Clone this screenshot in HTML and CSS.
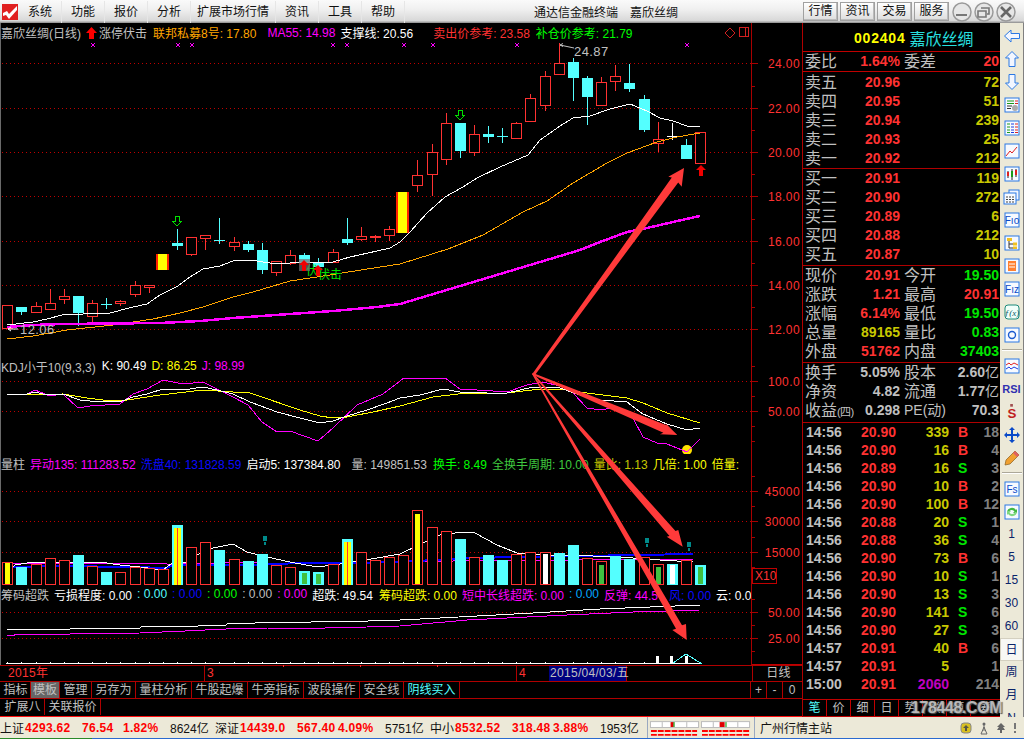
FILE: index.html
```html
<!DOCTYPE html>
<html>
<head lang="zh">
    <meta charset="UTF-8">
    <title>通达信金融终端 嘉欣丝绸</title>
    <link rel="stylesheet" href="styles.css">
</head>
<body>
<div class="topbar">
    <svg class="logo" width="16" height="16" viewBox="0 0 16 16">
        <rect width="16" height="16" fill="#e02020"/>
        <path d="M1 9 L5 7 L7 10 L15 2 L15 6 L7 15 L4 11 L1 12 Z" fill="#fff"/>
    </svg>
    <ul class="menu">
        <li>系统</li><li>功能</li><li>报价</li><li>分析</li><li class="wide">扩展市场行情</li><li>资讯</li><li>工具</li><li>帮助</li>
    </ul>
    <div class="apptitle"><span>通达信金融终端</span><span>嘉欣丝绸</span></div>
    <div class="topbtns">
        <span class="topbtn">行情</span><span class="topbtn">资讯</span><span class="topbtn">交易</span><span class="topbtn">服务</span>
    </div>
    <div class="winbtns">
        <svg width="22" height="20" viewBox="0 0 22 20"><circle cx="11" cy="10" r="9" class="wincircle"/><rect x="5" y="12" width="11" height="2" fill="#777"/></svg>
        <svg width="22" height="20" viewBox="0 0 22 20"><circle cx="11" cy="10" r="9" class="wincircle"/><path d="M8 6h8v6h-2M5 9h8v6H5z" fill="none" stroke="#777" stroke-width="1.6"/></svg>
        <svg width="22" height="20" viewBox="0 0 22 20"><circle cx="11" cy="10" r="9" class="wincircle"/><path d="M6 5l10 10M16 5L6 15" stroke="#666" stroke-width="2.6"/></svg>
    </div>
</div>

<div class="main">
    <div class="charts">
        <div class="pane pane-main">
            <svg class="plot" id="plot-main" viewBox="0 23 802 334"></svg>
            <div class="legend">
                <span class="c-grey">嘉欣丝绸(日线)</span>
                <svg class="lg-arrow" width="11" height="12" viewBox="0 0 11 12"><path d="M5.5 0L11 6H8V12H3V6H0Z" fill="#f00"/></svg>
                <span class="c-grey lg-tight">涨停伏击</span>
                <span class="c-orange lg-m6">联邦私募8号: 17.80</span>
                <span class="c-magenta lg-m11">MA55: 14.98</span>
                <span class="c-white lg-m5">支撑线: 20.56</span>
                <span class="c-red lg-m20">卖出价参考: 23.58</span>
                <span class="c-green lg-m6">补仓价参考: 21.79</span>
            </div>
        </div>
        <div class="pane pane-kdj">
            <svg class="plot" id="plot-kdj" viewBox="0 357 802 97"></svg>
            <div class="legend">
                <span class="c-grey">KDJ小于10(9,3,3)</span>
                <span class="c-white lg-m6">K: 90.49</span>
                <span class="c-yellow lg-m5">D: 86.25</span>
                <span class="c-magenta lg-m5">J: 98.99</span>
            </div>
        </div>
        <div class="pane pane-vol">
            <svg class="plot" id="plot-vol" viewBox="0 454 802 131"></svg>
            <div class="legend">
                <span class="c-grey">量柱</span>
                <span class="c-magenta lg-m5">异动135: 111283.52</span>
                <span class="c-blue lg-m5">洗盘40: 131828.59</span>
                <span class="c-white lg-m5">启动5: 137384.80</span>
                <span class="c-grey lg-m11">量: 149851.53</span>
                <span class="c-green lg-m6">换手: 8.49</span>
                <span class="c-dgreen lg-m5">全换手周期: 10.00</span>
                <span class="c-olive lg-m5">量比: 1.13</span>
                <span class="c-yellow lg-m5">几倍: 1.00</span>
                <span class="c-yellow lg-m5">倍量:</span>
            </div>
        </div>
        <div class="pane pane-chip">
            <svg class="plot" id="plot-chip" viewBox="0 585 802 80"></svg>
            <div class="legend">
                <span class="c-grey">筹码超跌</span>
                <span class="c-white lg-m5">亏损程度: 0.00</span>
                <span class="c-cyan lg-m5">: 0.00</span>
                <span class="c-blue lg-m5">: 0.00</span>
                <span class="c-green lg-m5">: 0.00</span>
                <span class="c-grey lg-m5">: 0.00</span>
                <span class="c-magenta lg-m5">: 0.00</span>
                <span class="c-white lg-m5">超跌: 49.54</span>
                <span class="c-yellow lg-m6">筹码超跌: 0.00</span>
                <span class="c-magenta lg-m5">短中长线超跌: 0.00</span>
                <span class="c-sky lg-m5">: 0.00</span>
                <span class="c-magenta lg-m5">反弹: 44.5</span>
                <span class="c-blue lg-m11">风: 0.00</span>
                <span class="c-white lg-m5">云: 0.0</span>
            </div>
        </div>
        <div class="datebar">
            <span class="d-year">2015年</span>
            <span class="d-mar">3</span>
            <span class="d-apr">4</span>
            <span class="d-cur">2015/04/03/五</span>
            <span class="d-fill"></span>
            <span class="d-cycle">日线</span>
        </div>
        <div class="tabs tabs-first">
            <span class="tab w30">指标</span><span class="tab w29 on">模板</span><span class="tab w32">管理</span><span class="tab w44">另存为</span><span class="tab w56">量柱分析</span><span class="tab w56">牛股起爆</span><span class="tab w56">牛旁指标</span><span class="tab w56">波段操作</span><span class="tab w44">安全线</span><span class="tab w56 c-cyan">阴线买入</span>
            <span class="tabs-fill"></span>
            <span class="tab w16">+</span><span class="tab w16">-</span><span class="tab w18 last">0</span>
        </div>
        <div class="tabs tabs-second">
            <span class="tab w44">扩展八</span><span class="tab w56">关联报价</span>
        </div>
        <svg class="arrows" viewBox="0 23 802 642">
            <polygon points="533,373 671.8,177.6 668.3,176.7 684,168 681.7,186.7 678.2,182.4 535,375" fill="#ff3a3a"/>
            <polygon points="533,373 666.6,425.3 665,422.7 677.3,435 660,434.3 663.400,432.7 533,375" fill="#ff3a3a"/>
            <polygon points="533,373 675.500,530.9 678.3,530 682.7,546.7 666.7,536.7 669.500,536.1 532,374" fill="#ff3a3a"/>
            <polygon points="533,373 682,625.3 686,624 686.7,640 672.3,630 676,628.7 532,374" fill="#ff3a3a"/>
        </svg>
    </div>

    <div class="quote">
        <div class="q-head"><span class="q-code">002404</span><span class="q-name">嘉欣丝绸</span></div>
        <div class="q-row q-ratio"><span class="lbl">委比</span><span class="val c-red">1.64%</span><span class="lbl lbl2">委差</span><span class="val c-red">20</span></div>
        <div class="q-sec q-sell">
            <div class="q-row"><span class="lbl">卖五</span><span class="val c-red">20.96</span><span></span><span class="val c-olive">72</span></div>
            <div class="q-row"><span class="lbl">卖四</span><span class="val c-red">20.95</span><span></span><span class="val c-olive">51</span></div>
            <div class="q-row"><span class="lbl">卖三</span><span class="val c-red">20.94</span><span></span><span class="val c-olive">239</span></div>
            <div class="q-row"><span class="lbl">卖二</span><span class="val c-red">20.93</span><span></span><span class="val c-olive">25</span></div>
            <div class="q-row"><span class="lbl">卖一</span><span class="val c-red">20.92</span><span></span><span class="val c-olive">212</span></div>
        </div>
        <div class="q-sec">
            <div class="q-row"><span class="lbl">买一</span><span class="val c-red">20.91</span><span></span><span class="val c-olive">119</span></div>
            <div class="q-row"><span class="lbl">买二</span><span class="val c-red">20.90</span><span></span><span class="val c-olive">272</span></div>
            <div class="q-row"><span class="lbl">买三</span><span class="val c-red">20.89</span><span></span><span class="val c-olive">6</span></div>
            <div class="q-row"><span class="lbl">买四</span><span class="val c-red">20.88</span><span></span><span class="val c-olive">212</span></div>
            <div class="q-row"><span class="lbl">买五</span><span class="val c-red">20.87</span><span></span><span class="val c-olive">10</span></div>
        </div>
        <div class="q-sec">
            <div class="q-row"><span class="lbl">现价</span><span class="val c-red">20.91</span><span class="lbl lbl2">今开</span><span class="val c-vgreen">19.50</span></div>
            <div class="q-row"><span class="lbl">涨跌</span><span class="val c-red">1.21</span><span class="lbl lbl2">最高</span><span class="val c-red">20.91</span></div>
            <div class="q-row"><span class="lbl">涨幅</span><span class="val c-red">6.14%</span><span class="lbl lbl2">最低</span><span class="val c-vgreen">19.50</span></div>
            <div class="q-row"><span class="lbl">总量</span><span class="val c-olive">89165</span><span class="lbl lbl2">量比</span><span class="val c-vgreen">0.83</span></div>
            <div class="q-row"><span class="lbl">外盘</span><span class="val c-red">51762</span><span class="lbl lbl2">内盘</span><span class="val c-vgreen">37403</span></div>
        </div>
        <div class="q-sec q-ext">
            <div class="q-row"><span class="lbl">换手</span><span class="val c-grey">5.05%</span><span class="lbl lbl2">股本</span><span class="val c-grey">2.60<i>亿</i></span></div>
            <div class="q-row"><span class="lbl">净资</span><span class="val c-grey">4.82</span><span class="lbl lbl2">流通</span><span class="val c-grey">1.77<i>亿</i></span></div>
            <div class="q-row"><span class="lbl">收益<i class="small">(四)</i></span><span class="val c-grey">0.298</span><span class="lbl lbl2 pe">PE(动)</span><span class="val c-grey">70.3</span></div>
        </div>
        <div class="trades">
            <div class="t-row"><span>14:56</span><span class="c-red r">20.90</span><span class="c-olive r">339</span><span class="c-red f">B</span><span class="r cnt">18</span></div>
            <div class="t-row"><span>14:56</span><span class="c-red r">20.90</span><span class="c-olive r">16</span><span class="c-red f">B</span><span class="r cnt">4</span></div>
            <div class="t-row"><span>14:56</span><span class="c-red r">20.89</span><span class="c-olive r">16</span><span class="c-vgreen f">S</span><span class="r cnt">3</span></div>
            <div class="t-row"><span>14:56</span><span class="c-red r">20.90</span><span class="c-olive r">10</span><span class="c-red f">B</span><span class="r cnt">2</span></div>
            <div class="t-row"><span>14:56</span><span class="c-red r">20.90</span><span class="c-olive r">100</span><span class="c-red f">B</span><span class="r cnt">12</span></div>
            <div class="t-row"><span>14:56</span><span class="c-red r">20.88</span><span class="c-olive r">20</span><span class="c-vgreen f">S</span><span class="r cnt">1</span></div>
            <div class="t-row"><span>14:56</span><span class="c-red r">20.88</span><span class="c-olive r">36</span><span class="c-vgreen f">S</span><span class="r cnt">4</span></div>
            <div class="t-row"><span>14:56</span><span class="c-red r">20.90</span><span class="c-olive r">73</span><span class="c-red f">B</span><span class="r cnt">6</span></div>
            <div class="t-row"><span>14:56</span><span class="c-red r">20.90</span><span class="c-olive r">10</span><span class="c-vgreen f">S</span><span class="r cnt">1</span></div>
            <div class="t-row"><span>14:56</span><span class="c-red r">20.90</span><span class="c-olive r">13</span><span class="c-vgreen f">S</span><span class="r cnt">3</span></div>
            <div class="t-row"><span>14:56</span><span class="c-red r">20.90</span><span class="c-olive r">141</span><span class="c-vgreen f">S</span><span class="r cnt">6</span></div>
            <div class="t-row"><span>14:56</span><span class="c-red r">20.90</span><span class="c-olive r">27</span><span class="c-vgreen f">S</span><span class="r cnt">3</span></div>
            <div class="t-row"><span>14:57</span><span class="c-red r">20.91</span><span class="c-olive r">40</span><span class="c-red f">B</span><span class="r cnt">6</span></div>
            <div class="t-row"><span>14:57</span><span class="c-red r">20.91</span><span class="c-olive r">5</span><span class="f"></span><span class="r cnt">1</span></div>
            <div class="t-row"><span>15:00</span><span class="c-red r">20.91</span><span class="c-purple r">2060</span><span class="f"></span><span class="r cnt">214</span></div>
        </div>
        <div class="q-tabs">
            <span class="c-cyan">笔</span><span>价</span><span>细</span><span>日</span><span>势</span><span>联</span><span>值</span><span class="last">筹</span>
        </div>
    </div>

    <div class="tools">
        <svg class="tool" width="16" height="14" viewBox="0 0 16 14"><path d="M.5 7L7 1v3.5h8.5v5H7V13z" fill="#f2f6ff" stroke="#2a78e4"/></svg>
        <svg class="tool" width="14" height="16" viewBox="0 0 14 16"><path d="M7 .5L13.5 7H10v8.500H4V7H.5z" fill="#f2f6ff" stroke="#2a78e4"/></svg>
        <svg class="tool" width="14" height="16" viewBox="0 0 14 16"><path d="M7 15.500L13.500 9H10V.5H4V9H.5z" fill="#f2f6ff" stroke="#2a78e4"/></svg>
        <svg class="tool" width="16" height="16" viewBox="0 0 16 16"><rect class="tbox" x="1" y="1" width="14" height="14"/><path d="M3 4h7M3 6.500h7" stroke="#1a9a1a"/><path d="M11 4h3M11 6.500h3" stroke="#e02020"/><path d="M3 9h5M3 11.500h4" stroke="#333"/><circle cx="11" cy="11" r="3" fill="#aaa"/></svg>
        <svg class="tool" width="16" height="16" viewBox="0 0 16 16"><rect class="tbox" x="1" y="1" width="14" height="14"/><path d="M3 4h3M3 7h3M3 10h3M3 12.500h3" stroke="#1a9a1a" stroke-dasharray="3 0"/><path d="M7 4h3M7 7h3M7 10h3M7 12.500h3" stroke="#1a3ae0"/><path d="M11 4h3M11 7h3M11 10h3M11 12.500h3" stroke="#e02020"/></svg>
        <svg class="tool" width="16" height="16" viewBox="0 0 16 16"><rect class="tbox" x="1" y="1" width="14" height="14"/><path d="M2 13L6 8l2 2 5-6" fill="none" stroke="#e02020"/></svg>
        <svg class="tool" width="16" height="16" viewBox="0 0 16 16"><rect class="tbox" x="1" y="1" width="14" height="14"/><path d="M4 5v7M8 3v11M12 3v8" stroke="#222"/><rect x="3" y="6" width="2" height="4" fill="#e02020"/><rect x="7" y="5" width="2" height="6" fill="#1a9a1a"/><rect x="11" y="4" width="2" height="5" fill="#e02020"/></svg>
        <svg class="tool" width="17" height="16" viewBox="0 0 17 16"><rect x="6" y="1" width="10" height="10" fill="#f2f6ff" stroke="#2a78e4"/><rect class="tbox" x="1" y="4" width="12" height="11"/><path d="M3 8h2M6 8h2M9 8h2M3 10.500h2M6 10.500h2M9 10.500h2M3 13h2M6 13h2M9 13h2" stroke="#444"/></svg>
        <svg class="tool" width="16" height="16" viewBox="0 0 16 16"><rect class="tbox" x="1" y="1" width="14" height="14"/><text class="tool-txt" x="8" y="12">Fıo</text></svg>
        <svg class="tool" width="16" height="16" viewBox="0 0 16 16"><rect class="tbox" x="1" y="1" width="14" height="14"/><path d="M5 5v8h4M5 9h4" fill="none" stroke="#333"/><rect x="3" y="3" width="5" height="3" fill="#f0c020"/><rect x="9" y="7.500" width="4" height="3" fill="#f0c020"/><rect x="9" y="11.500" width="4" height="2.500" fill="#f0c020"/></svg>
        <svg class="tool" width="16" height="16" viewBox="0 0 16 16"><rect class="tbox" x="1" y="1" width="14" height="14"/><rect x="4" y="3" width="8" height="10" fill="#ff8030"/><path d="M5 6h6M5 9h6" stroke="#fff"/></svg>
        <svg class="tool" width="16" height="16" viewBox="0 0 16 16"><rect class="tbox" x="1" y="1" width="14" height="14"/><text class="tool-txt" x="8" y="12">Fız</text></svg>
        <svg class="tool" width="16" height="16" viewBox="0 0 16 16"><rect x="1" y="1" width="14" height="14" rx="3" fill="#f2fffa" stroke="#1a8a7a"/><text class="tool-fx" x="8" y="12">ƒ(x)</text></svg>
        <svg class="tool" width="16" height="16" viewBox="0 0 16 16"><rect class="tbox" x="1" y="1" width="14" height="14"/><circle cx="8" cy="8" r="3.500" fill="none" stroke="#1a5ad0" stroke-width="1.400"/></svg>
        <div class="tool-sep"></div>
        <svg class="tool" width="16" height="16" viewBox="0 0 16 16"><rect class="tbox" x="1" y="1" width="14" height="14"/><path d="M2 7l3-2 2 2 3-2 4 2" fill="none" stroke="#e02020"/><path d="M2 11l3-2 2 2 3-2 4 2" fill="none" stroke="#1a3ae0"/></svg>
        <div class="tool tool-rsi">RSI</div>
        <svg class="tool" width="14" height="18" viewBox="0 0 14 18"><rect x="5" y="0" width="3" height="3" fill="#a05050"/><text class="tool-s" x="7" y="16">S</text></svg>
        <svg class="tool" width="16" height="16" viewBox="0 0 16 16"><path d="M8 0l3 3H9v4h4V5l3 3-3 3V9H9v4h2l-3 3-3-3h2V9H3v2L0 8l3-3v2h4V3H5z" fill="#0a4ac8"/></svg>
        <svg class="tool" width="16" height="16" viewBox="0 0 16 16"><path d="M1 15l1-5L11 1l4 4-9 9z" fill="#f0a030" stroke="#8a6020" stroke-width=".7"/><path d="M11 1l4 4-2 2-4-4z" fill="#e06060"/></svg>
        <div class="tool-sep"></div>
        <svg class="tool" width="16" height="16" viewBox="0 0 16 16"><rect class="tbox" x="1" y="1" width="14" height="14"/><text class="tool-txt" x="8" y="12">Fs</text></svg>
        <svg class="tool" width="16" height="16" viewBox="0 0 16 16"><rect class="tbox" x="1" y="1" width="14" height="14"/><path d="M3 8a5 5 0 0 1 9-2l1-1v4H9l1.500-1.500A3 3 0 0 0 5 8z" fill="#40b840"/><path d="M13 8a5 5 0 0 1-9 2l-1 1V7h4L5.500 8.500A3 3 0 0 0 11 8z" fill="#80d880"/></svg>
        <span class="tool tool-cyc">1</span>
        <span class="tool tool-cyc">5</span>
        <span class="tool tool-cyc">15</span>
        <span class="tool tool-cyc">30</span>
        <span class="tool tool-cyc">60</span>
        <span class="tool tool-cyc on">日</span>
        <span class="tool tool-cyc">周</span>
        <span class="tool tool-cyc">月</span>
        <span class="tool tool-cyc">N</span>
    </div>
    <div class="watermark">178448.COM</div>
</div>

<div class="status">
    <div class="st-group"><span>上证</span><b>4293.62</b><b>76.54</b><b>1.82%</b><span>8624亿</span></div>
    <div class="st-group"><span>深证</span><b>14439.0</b><b>567.40</b><b>4.09%</b><span>5751亿</span></div>
    <div class="st-group"><span>中小</span><b>8532.52</b><b>318.48</b><b>3.88%</b><span>1953亿</span></div>
    <svg class="st-meter" width="108" height="21" viewBox="0 0 108 21">
        <g fill="#fff" stroke="#bbb">
            <rect x="2.500" y="4.500" width="49" height="6"/>
            <rect x="54.500" y="4.500" width="49" height="6"/>
        </g>
        <path d="M14.500 5v5M26.500 5v5M39.500 5v5M66.500 5v5M78.500 5v5M91.500 5v5" stroke="#bbb"/>
        <rect x="23" y="5" width="3" height="5" fill="#e00000"/><rect x="26" y="5" width="1" height="5" fill="#0a0"/>
        <rect x="73" y="5" width="5" height="5" fill="#e00000"/><rect x="79" y="5" width="1" height="5" fill="#0a0"/>
        <path d="M3 14h47M55 14h48M3 18h47M55 18h48" stroke="#f00" stroke-width="2" stroke-dasharray="6 1"/>
    </svg>
    <span class="st-server">广州行情主站</span>
    <div class="st-icons">
        <svg width="12" height="12" viewBox="0 0 12 12"><rect x="1" y="1" width="10" height="10" rx="3" fill="#d8c020" stroke="#888"/><path d="M6 3L9 6H3zM5 6h2v3H5z" fill="#554"/></svg>
        <svg width="10" height="14" viewBox="0 0 10 14"><path d="M5 3v7M2 13h6L5 6z" fill="none" stroke="#666"/><circle cx="5" cy="3" r="1.500" fill="#666"/></svg>
        <svg width="10" height="12" viewBox="0 0 10 12"><path d="M5 1L1 5h2l-2 3h3v3h2V8h3L7 5h2z" fill="#666"/></svg>
        <svg width="4" height="12" viewBox="0 0 4 12"><rect x="1" y="1" width="2" height="6" fill="#777"/><rect x="1" y="9" width="2" height="2" fill="#777"/></svg>
    </div>
</div>

<script src="chart.js"></script>
</body>
</html>
```

FILE: styles.css
```css
*{
    margin: 0;
    padding: 0;
    box-sizing: border-box;
}
html,body{
    width: 1024px;
    height: 739px;
    overflow: hidden;
}
body{
    display: flex;
    flex-direction: column;
    background: #000000;
    font-family: "Liberation Sans", "Noto Sans CJK SC", sans-serif;
    font-size: 12px;
}
li{
    list-style: none;
}
i{
    font-style: normal;
}

/* top bar */
.topbar{
    display: flex;
    align-items: center;
    height: 23px;
    flex: none;
    background: linear-gradient(#fafafa, #f0f0f0 40%, #d8d8d8 90%, #8a8a8a);
    color: #111111;
    font-size: 12px;
}
.logo{
    margin-left: 2px;
    flex: none;
}
.menu{
    display: flex;
    margin-left: 1px;
}
.menu li{
    width: 43px;
    height: 22px;
    line-height: 22px;
    text-align: center;
    border-right: 1px solid #e6e6e6;
}
.menu .wide{
    width: 85px;
}
.apptitle{
    display: flex;
    gap: 12px;
    margin-left: 129px;
}
.topbtns{
    display: flex;
    gap: 2px;
    margin-left: 125px;
}
.topbtn{
    width: 35px;
    height: 19px;
    line-height: 17px;
    text-align: center;
    border: 1px solid #a0a0a0;
    background: linear-gradient(#ffffff, #dddddd);
    box-shadow: inset -1px -1px 0 #bbbbbb;
}
.winbtns{
    display: flex;
    margin-left: 2px;
}
.wincircle{
    fill: #e6e6e6;
    stroke: #9a9a9a;
    stroke-width: 1.5;
}

/* main area */
.main{
    position: relative;
    display: flex;
    height: 694px;
    flex: none;
}
.charts{
    position: relative;
    display: flex;
    flex-direction: column;
    width: 802px;
    flex: none;
}
.pane{
    position: relative;
    overflow: hidden;
}
.pane-main{
    height: 334px;
}
.pane-kdj{
    height: 97px;
}
.pane-vol{
    height: 131px;
}
.pane-chip{
    height: 80px;
    overflow: visible;
}
.plot{
    position: absolute;
    left: 0;
    top: 0;
    width: 802px;
    height: 100%;
    overflow: visible;
}
.arrows{
    position: absolute;
    left: 0;
    top: 0;
    width: 802px;
    height: 642px;
    overflow: visible;
    pointer-events: none;
}
.legend{
    position: relative;
    display: flex;
    align-items: center;
    width: 751px;
    height: 18px;
    padding-left: 1px;
    white-space: nowrap;
    overflow: hidden;
}
.pane-main .legend{
    padding-top: 1px;
}
.lg-arrow{
    margin-left: 5px;
    flex: none;
}
.lg-tight{
    margin-left: 2px;
}
.lg-m5{
    margin-left: 5px;
}
.lg-m6{
    margin-left: 6px;
}
.lg-m11{
    margin-left: 11px;
}
.lg-m20{
    margin-left: 20px;
}
.c-grey{ color: #c0c0c0; }
.c-white{ color: #ffffff; }
.c-red{ color: #ff3232; }
.c-orange{ color: #ffa500; }
.c-magenta{ color: #ff00ff; }
.c-green{ color: #00ff00; }
.c-dgreen{ color: #3fc83f; }
.c-vgreen{ color: #00e600; }
.c-yellow{ color: #ffff00; }
.c-olive{ color: #c8c800; }
.c-blue{ color: #0a0aff; }
.c-cyan{ color: #54ffff; }
.c-sky{ color: #00a8ff; }
.c-purple{ color: #c000c0; }

/* date bar and tab rows */
.datebar{
    display: flex;
    height: 16px;
    line-height: 15px;
    flex: none;
    color: #ff3232;
    border-top: 1px solid #b00000;
    letter-spacing: .3px;
}
.datebar span{
    display: block;
    padding-left: 2px;
}
.d-year{
    width: 204px;
    padding-left: 8px !important;
}
.d-mar{
    width: 312px;
    border-left: 1px solid #b00000;
}
.d-apr{
    width: 33px;
    border-left: 1px solid #b00000;
}
.d-cur{
    width: 78px;
    background: #000080;
    color: #c0c0c0;
    border-right: 1px solid #b00000;
    white-space: nowrap;
    padding-left: 1px !important;
}
.d-fill{
    width: 125px;
}
.d-cycle{
    width: 50px;
    color: #c0c0c0;
    text-align: center;
    border-left: 1px solid #b00000;
}
.tabs{
    display: flex;
    flex: none;
    color: #c0c0c0;
    border-top: 1px solid #b00000;
    line-height: 16px;
}
.tabs-first{
    height: 17px;
}
.tabs-second{
    height: 19px;
    padding-bottom: 1px;
    border-bottom: 1px solid #ff1010;
}
.tab{
    display: block;
    text-align: center;
    border-right: 1px solid #b00000;
    height: 16px;
}
.tab.on{
    background: #666666;
}
.tab.last{
    border-right: 0;
}
.tabs-first .tab:first-child,
.tabs-second .tab:first-child{
    margin-left: 1px;
}
.tabs-fill{
    width: 291px;
    border-right: 1px solid #b00000;
}
.w16{ width: 16px; }
.w18{ width: 18px; }
.w29{ width: 29px; }
.w30{ width: 30px; }
.w32{ width: 32px; }
.w44{ width: 44px; }
.w56{ width: 56px; }

/* quote panel */
.quote{
    display: flex;
    flex-direction: column;
    width: 198px;
    flex: none;
    border-left: 1px solid #b00000;
    color: #c0c0c0;
}
.q-head{
    display: flex;
    align-items: center;
    gap: 4px;
    height: 29px;
    flex: none;
    border-bottom: 1px solid #c00000;
    padding-top: 1px;
    padding-left: 51px;
}
.q-code{
    color: #ffff00;
    font-weight: bold;
    font-size: 14px;
    letter-spacing: .8px;
}
.q-name{
    color: #28e0e0;
    font-size: 16px;
}
.q-row{
    display: grid;
    grid-template-columns: 46px 49px 53px 46px;
    height: 19px;
    line-height: 19px;
    padding-left: 2px;
}
.q-row .lbl{
    font-size: 16px;
    line-height: 19px;
    color: #c0c0c0;
    white-space: nowrap;
}
.q-row .lbl2{
    padding-left: 4px;
}
.q-row .small{
    font-size: 11px;
    letter-spacing: -.6px;
}
.q-row .val{
    text-align: right;
    font-weight: bold;
    font-size: 14px;
    white-space: nowrap;
}
.q-row .val i{
    font-weight: normal;
    font-size: 14px;
}
.q-row .pe{
    font-size: 14px;
}
.q-ratio{
    height: 20px;
    flex: none;
    border-bottom: 1px solid #c00000;
}
.q-sec{
    height: 97px;
    flex: none;
    border-bottom: 1px solid #b00000;
}
.q-sell{
    padding-top: 1px;
}
.q-ext{
    height: 60px;
}
.trades{
    flex: 1;
    border-top: 1px solid #b00000;
    margin-top: -1px;
}
.t-row{
    display: grid;
    grid-template-columns: 50px 40px 53px 19px 31px;
    height: 18px;
    line-height: 18px;
    padding-left: 3px;
    font-size: 14px;
    font-weight: bold;
}
.t-row .r{
    text-align: right;
}
.t-row .f{
    padding-left: 9px;
}
.t-row .cnt{
    color: #808080;
}
.q-tabs{
    display: flex;
    height: 18px;
    line-height: 16px;
    flex: none;
    border-top: 1px solid #c00000;
    border-bottom: 1px solid #c00000;
    font-size: 12px;
}
.q-tabs span{
    width: 24px;
    text-align: center;
    border-right: 1px solid #c00000;
}
.q-tabs .last{
    width: 29px;
    border-right: 0;
}

/* right toolbar */
.tools{
    display: flex;
    flex-direction: column;
    align-items: center;
    width: 24px;
    height: 694px;
    flex: none;
    padding-top: 1px;
    overflow: hidden;
    background: #ece9d8;
    border-right: 1px solid #808080;
    color: #0a246a;
}
.tool{
    display: block;
    flex: none;
    margin-top: 3.5px;
    margin-bottom: 3.5px;
}
svg.tool{
    height: 16px;
}
.tool-sep{
    width: 20px;
    height: 0;
    margin: 3px 0;
    flex: none;
    border-top: 1px solid #aca899;
    border-bottom: 1px solid #ffffff;
}
.tool-rsi{
    height: 16px;
    line-height: 16px;
    color: #3030b0;
    font-weight: bold;
    font-size: 11px;
}
.tool-cyc{
    width: 23px;
    height: 23px;
    margin: 0;
    line-height: 23px;
    text-align: center;
    font-size: 12px;
}
.tool-cyc.on{
    background: #f8f8f4;
    border: 1px solid #d4d0c0;
}
.tbox{
    fill: #f7faff;
    stroke: #2a78e4;
}
.tool-txt{
    font-family: "Liberation Sans", sans-serif;
    font-size: 10px;
    fill: #0a4ac8;
    text-anchor: middle;
}
.tool-fx{
    font-family: "Liberation Serif", serif;
    font-size: 9px;
    font-style: italic;
    fill: #0a5a6a;
    text-anchor: middle;
}
.tool-s{
    font-family: "Liberation Sans", sans-serif;
    font-size: 15px;
    font-weight: bold;
    fill: #c02020;
    text-anchor: middle;
}

.watermark{
    position: absolute;
    left: 911px;
    top: 676px;
    color: rgba(255,255,255,.6);
    font-size: 16px;
    font-weight: bold;
    letter-spacing: -.4px;
    text-shadow: 1px 1px 1px #555555, -1px 0 1px #555555;
}

/* status bar */
.status{
    display: flex;
    align-items: center;
    height: 22px;
    flex: none;
    background: #ece9d8;
    color: #111111;
    font-size: 12px;
    border-bottom: 1px solid #2a6ad0;
    border-image: linear-gradient(to right, #2a8a2a 93px, #2a6ad0 93px) 1;
}
.st-group{
    display: grid;
    grid-template-columns: 25px 57px 41px 47px 45px;
    width: 215px;
    flex: none;
    align-items: center;
    white-space: nowrap;
}
.st-group span{
    font-size: 12px;
}
.st-group b{
    color: #ff0000;
    letter-spacing: .3px;
}
.st-meter{
    flex: none;
    margin-left: 2px;
    height: 21px;
    border-left: 1px solid #9aa8c0;
    border-right: 1px solid #9aa8c0;
}
.st-server{
    margin-left: 5px;
    font-size: 12px;
    white-space: nowrap;
}
.st-icons{
    display: flex;
    align-items: center;
    gap: 7px;
    margin-left: 128px;
}
```

FILE: chart.js
```js
// 日线数据, 坐标直接按页面像素算
var RED = "#ff3232";
var CYAN = "#54ffff";
var DOT = "#c00000";
var AXIS = "#a80000";

function xAt(i){
    return Math.round(7.3 + 14.14 * i);
}
function line(pts,color,w){
    return '<polyline shape-rendering="crispEdges" fill="none" stroke="' + color + '" stroke-width="' + (w || 1) + '" points="' + pts + '"/>';
}
function seg(x1,y1,x2,y2,color){
    return '<line shape-rendering="crispEdges" x1="' + x1 + '" y1="' + y1 + '" x2="' + x2 + '" y2="' + y2 + '" stroke="' + color + '"/>';
}
function box(x,y,w,h,fill,stroke){
    return '<rect shape-rendering="crispEdges" x="' + x + '" y="' + y + '" width="' + w + '" height="' + h + '" fill="' + fill + '"' + (stroke ? ' stroke="' + stroke + '"' : '') + '/>';
}
function grid(ys){
    var s = "";
    for(var i = 0;i<ys.length;i++){
        s += '<line shape-rendering="crispEdges" x1="2" x2="751" y1="' + ys[i] + '" y2="' + ys[i] + '" stroke="' + DOT + '" stroke-dasharray="1 3"/>';
    }
    return s;
}
function axis(top,bottom,labels,minor){
    var s = seg(751.5,top,751.5,bottom,AXIS);
    for(var i = 0;i<labels.length;i++){
        s += seg(752,labels[i][0],758,labels[i][0],AXIS);
        s += '<text x="800" y="' + (labels[i][0] + 4.5) + '" text-anchor="end" fill="' + RED + '" font-size="12" letter-spacing=".4">' + labels[i][1] + '</text>';
    }
    for(var j = 0;j<minor.length;j++){
        s += seg(752,minor[j],755,minor[j],AXIS);
    }
    return s;
}

// [类型, 上影, 实体顶, 实体底, 下影]  r=阳 c=阴 y=黄柱 w=白十字
var candles = [
    ["r",305,305.5,328.5,329],["c",307,307,312,315],["r",302,306.5,312.5,313],["r",289,303.5,309.5,310],
    ["r",289,296.5,299.5,304],["c",296,296,313,326],["r",300,303.5,316.5,323],["c",298,304,305,309],
    ["r",300,301.5,303.5,306],["r",281,285.5,294.5,297],["r",285,285.5,287.5,293],["y",254,254,270,270],
    ["c",229,243,246,250],["r",237,237.5,254.5,256],["r",235,235.5,238.5,250],["c",218,240,241,244],
    ["r",237,242.5,246.5,251],["c",241,244,250,252],["c",243,250,270,274],["r",261,261.5,272.5,276],
    ["r",250,255.5,263.5,265],["c",253,255,263,266],["c",258,262,267,270],["r",249,252.5,262.5,263],
    ["c",218,239,243,245],["r",227,236.5,239.5,241],["r",235,236.5,237.5,242],["r",226,229.5,235.5,241],
    ["y",192,192,233,236],["r",160,175.5,185.5,192],["r",144,152.5,174.5,196],["r",113,123.5,159.5,165],
    ["c",123,123,151,158],["r",125,134.5,152.5,156],["c",126,134,137,143],["c",128,136,137,143],
    ["r",122,123.5,138.5,139],["r",94,98.5,121.5,122],["r",71,76.5,105.5,111],["r",43,63.5,74.5,75],
    ["c",58,62,78,101],["c",76,78,97,125],["r",77,82.5,105.5,106],["r",65,76.5,81.5,91],
    ["c",64,83,89,92],["c",95,99,130,132],["r",122,139.5,143.5,152],["w",123,136,137,140],
    ["c",139,145,159,159],["r",132,132.5,163.5,164]
];

var maWhite = "7,325 33,322 47,319 62,315 83,314 110,313 133,307 147,304 160,295 178,286 190,277 203,269 220,266 233,261 250,260 263,262 277,264 290,263 310,262 333,262 350,257 377,251 390,248 400,242 410,232 427,213 445,197 463,187 477,178 500,167 528,155 540,140 560,126 573,118 590,116 610,109 630,104 647,111 660,118 673,121 687,126 700,127";
var maOrange = "7,339 33,336 67,330 113,325 153,319 180,313 203,307 233,297 253,292 290,281 330,275 367,269 400,264 448,249 483,235 523,212 547,201 573,183 607,163 627,153 657,142 677,137 700,133";
var maPink = "7,327 33,325 63,324 160,323 200,321 233,318 290,314 333,311 377,307 400,304 580,250 600,242 627,232 647,228 673,222 700,216";

function drawMain(){
    var s = '<line x1=".5" x2=".5" y1="23" y2="357" stroke="#6a6a6a"/>';
    s += grid([63.5,108.5,152.5,196.5,241.5,285.5,329.5]);
    s += axis(23,357,[[63.5,"24.00"],[108.5,"22.00"],[152.5,"20.00"],[196.5,"18.00"],[241.5,"16.00"],[285.5,"14.00"],[329.5,"12.00"]],[86.5,130.5,174.5,219.5,263.5,307.5]);
    s += seg(2,357.5,802,357.5,"#c00000");

    for(var i = 0;i<candles.length;i++){
        var c = candles[i], x = xAt(i), k = c[0];
        if(k == "y"){
            s += box(x - 7,c[2],13,c[3] - c[2],"#ffff00");
            s += box(x - 7,c[2],2,c[3] - c[2],"#ff2000");
            s += box(x + 4,c[2],2,c[3] - c[2],"#ff2000");
            continue;
        }
        var color = k == "r" ? RED : (k == "c" ? CYAN : "#ffffff");
        s += seg(x + .5,c[1],x + .5,c[4],color);
        if(k == "r"){
            s += box(x - 5 + .5,c[2],10,c[3] - c[2],"#000000",RED);
        }else if(k == "c"){
            s += box(x - 5,c[2],11,c[3] - c[2],CYAN);
        }else{
            s += box(x - 5,c[2],11,1,color);
        }
    }

    s += line(maOrange,"#ffa500");
    s += line(maWhite,"#ffffff");
    s += line(maPink,"#ff00ff",2.5);

    // 顶部的小叉
    var marks = [93,178,192,333,347,404,433,517,687];
    for(var m = 0;m<marks.length;m++){
        s += '<path d="M' + (marks[m] - 2) + ' 43l4 4m0 -4l-4 4" stroke="#ff00ff"/>';
    }

    // 绿色空心箭头
    s += downArrow(177,216) + downArrow(460,110);
    // 伏击字样, 红箭头压在上面
    s += '<text x="306" y="275" fill="#00e000" font-size="12">伏</text>';
    s += '<text x="318" y="279" fill="#00e000" font-size="12">伏击</text>';
    s += '<rect x="299" y="259" width="11" height="12" fill="#707070" opacity=".7"/>';
    s += upArrow(304,260) + upArrow(318,265) + upArrow(701,165);

    // 最高价 最低价 标注
    s += '<path d="M560 45l14 3M560 45l3 -1.500M560 45l3 1.500" stroke="#c0c0c0" fill="none"/>';
    s += '<text x="574" y="56" fill="#c0c0c0" font-size="13" letter-spacing=".4">24.87</text>';
    s += '<path d="M8 329h10M8 329l3 -2M8 329l3 2" stroke="#ffffff" fill="none"/>';
    s += '<text x="20" y="334" fill="#c0c0c0" font-size="13" letter-spacing=".4">12.06</text>';

    // 右上角小图标
    s += '<path d="M730 28l5 5 -5 5 -5 -5z" fill="none" stroke="#d02020"/>';
    s += '<rect x="739.500" y="27.500" width="9" height="9" fill="none" stroke="#d02020"/><line x1="745.500" x2="745.500" y1="28" y2="36" stroke="#d02020"/>';
    document.getElementById("plot-main").innerHTML = s;
}
function downArrow(x,y){
    return '<path shape-rendering="crispEdges" d="M' + (x - 2) + ' ' + y + 'h4v5h3l-5 5 -5 -5h3z" fill="none" stroke="#00e000"/>';
}
function upArrow(x,y){
    return '<path d="M' + x + ' ' + y + 'l5 5h-3v6h-4v-6h-3z" fill="#f00000"/>';
}

function drawKdj(){
    var k = "7,395 27,394 35,392 47,395 63,394 80,400 100,402 122,401 133,397 147,394 163,389 183,390 203,387 217,390 233,394 250,402 277,412 300,418 320,423 333,421 347,416 367,410 387,403 400,398 420,395 443,389 460,392 487,393 507,393 533,387 557,387 580,395 600,400 627,402 643,414 667,424 687,430 700,428";
    var d = "7,395 63,394 87,398 103,400 127,400 160,395 203,390 233,392 250,393 300,410 320,416 333,418 347,417 373,412 400,406 433,397 467,393 507,393 540,389 560,389 587,393 627,398 643,403 667,413 700,423";
    var j = "7,394 27,394 35,390 50,396 63,394 78,408 90,406 120,404 133,394 147,389 163,380 183,384 203,382 217,389 233,397 248,405 262,422 277,432 290,431 318,441 333,428 357,405 383,394 400,381 404,378 417,379 445,378 460,389 493,391 507,392 527,385 543,382 560,386 573,393 587,408 600,410 617,407 633,418 643,437 657,443 667,444 687,452 700,439";
    var s = '<line x1=".5" x2=".5" y1="357" y2="454" stroke="#6a6a6a"/>';
    s += grid([381.5,411.5]);
    s += axis(357,454,[[381.5,"100.0"],[411.5,"50.00"]],[396.5,426.5,441.5,366.5]);
    s += '<circle cx="687" cy="450" r="5" fill="#ffe000"/>';
    s += line(j,"#ff00ff") + line(d,"#ffff00") + line(k,"#ffffff");
    s += seg(2,454.5,802,454.5,"#c00000");
    document.getElementById("plot-kdj").innerHTML = s;
}

function drawVol(){
    var tops = [562,567,564,558,560,555,566,572,572,567,568,569,525,547,542,550,559,561,554,565,567,571,572,564,539,552,560,557,555,510,527,531,539,557,555,560,554,552,552,553,545,558,561,556,559,557,564,564,560,565];
    var kinds = "rcrrrcrcrrrrcrrcrccrrccrcrrrrrrrcrccrrrccrrccrrcr".split("");
    // 柱子里的小实心: 下标 -> [颜色, 顶]
    var inner = {0:["#ffff00",563],21:["#40c040",573],22:["#40c040",574],29:["#ffff00",514],38:["#ffffff",554],42:["#40c040",565],46:["#40c040",567],47:["#ffffff",565],49:["#40c040",567]};
    var s = '<line x1=".5" x2=".5" y1="454" y2="585" stroke="#6a6a6a"/>';
    s += grid([491.5,521.5,552.5]);
    s += axis(454,585,[[491.5,"45000"],[521.5,"30000"],[552.5,"15000"]],[476.5,506.5,537.5,567.5]);
    // 均量线在柱子后面
    s += line("3,563 167,564 172,564 267,562 343,562 400,562 410,561 453,561 693,559","#ff00ff");
    s += line("13,567 60,566 133,567 167,568 173,565 253,565 300,563 353,563 400,562 467,558 693,554","#0000ff",2);
    s += line("7,572 15,565 33,562 53,562 73,563 100,562 120,565 140,567 163,570 172,563 187,562 197,555 213,548 233,544 247,552 267,557 290,562 317,567 333,565 353,562 377,558 400,554 423,543 440,535 463,532 475,533 497,545 517,553 550,555 573,555 613,557 633,558 660,560 693,562","#ffffff");
    for(var i = 0;i<tops.length;i++){
        var x = xAt(i), y = tops[i];
        if(kinds[i] == "r"){
            s += box(x - 5 + .5,y + .5,10,584 - y,"#000000",RED);
        }else{
            s += box(x - 5,y,11,585 - y,CYAN);
        }
        if(inner[i]){
            s += box(x - 2,inner[i][1],5,584 - inner[i][1],inner[i][0]);
        }
        if(i == 12 || i == 24){
            s += box(x - 3,y + 3,7,582 - y,"#ffff00") + box(x,y + 3,1,582 - y,RED);
        }
    }
    var tips = [[265,536],[647,538],[689,542]];
    for(var t = 0;t<tips.length;t++){
        s += box(tips[t][0] - 2,tips[t][1],4,5,"#008a8a") + box(tips[t][0] - 1,tips[t][1] + 6,2,3,"#008a8a");
    }
    s += '<rect x="752.500" y="568.500" width="24" height="15" fill="none" stroke="#c00000"/>';
    s += '<text x="755" y="580" fill="' + RED + '" font-size="12">X10</text>';
    s += seg(2,585.5,802,585.5,"#e00000");
    document.getElementById("plot-vol").innerHTML = s;
}

function drawChip(){
    var w = "7,629 70,629 72,628 140,628 142,626 198,626 200,625 226,625 228,623 255,623 257,622 311,622 313,621 368,621 370,620 400,620 440,618 533,613 600,609 700,605";
    var p = "7,635 14,635 14,634 70,634 140,633 185,631 226,629 268,628 325,628 367,627 400,626 467,620 567,615 633,612 700,610";
    var s = '<line x1=".5" x2=".5" y1="585" y2="665" stroke="#6a6a6a"/>';
    s += grid([612.5,638.5]);
    s += axis(585,665,[[612.5,"50.00"],[638.5,"25.00"]],[599.5,625.5,651.5]);
    s += line(p,"#ff00ff") + line(w,"#ffffff");
    s += seg(6,663.5,702,663.5,"#ffffff");
    for(var i = 0;i<50;i++){
        s += seg(xAt(i) + .5,662,xAt(i) + .5,663,"#ffffff");
    }
    s += box(656,656,3,8,"#ffffff") + box(670,656,3,8,"#ffffff") + box(685,656,3,8,"#ffffff");
    s += line("673,663 686,654 702,664",CYAN);
    s += seg(283.5,665,283.5,667,RED) + seg(360.5,665,360.5,667,RED) + seg(437.5,665,437.5,667,RED);
    s += seg(752,664.5,802,664.5,"#c00000");
    document.getElementById("plot-chip").innerHTML = s;
}

drawMain();
drawKdj();
drawVol();
drawChip();
```
